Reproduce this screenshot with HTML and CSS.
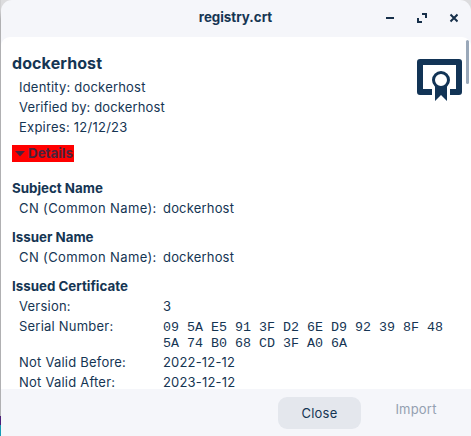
FILE: index.html
```html
<!DOCTYPE html>
<html lang="en">
<head>
<meta charset="utf-8">
<title>registry.crt</title>
<link rel="stylesheet" href="styles.css">
</head>
<body>
<div class="window">
  <header class="titlebar">
    <h1 class="title">registry.crt</h1>
    <svg class="controls" width="72" height="16" viewBox="0 0 72 16">
      <path class="dark" d="M0 7h8v2H0z"/>
      <path class="dark" d="M36 3h5v5h-2V5h-3zM31 8h2v3h3v2h-5z"/>
      <path class="cross" d="M64.500 4.500l7 7M71.500 4.500l-7 7"/>
    </svg>
  </header>
  <main class="content">
    <section class="summary">
      <div>
        <h2 class="name">dockerhost</h2>
        <p class="row">Identity: dockerhost</p>
        <p class="row verified">Verified by: dockerhost</p>
        <p class="row expires">Expires: 12/12/23</p>
      </div>
      <svg class="certificate" width="46" height="42" viewBox="0 0 46 42">
        <path class="navy" fill-rule="evenodd" d="M3 0h39a3 3 0 0 1 3 3v30a3 3 0 0 1-3 3H33v-6h6V6H6v24h9v6H3a3 3 0 0 1-3-3V3a3 3 0 0 1 3-3z"/>
        <path class="navy" d="M18 27h12v15l-6-6-6 6z"/>
        <circle class="seal" cx="24" cy="21" r="7.500"/>
      </svg>
    </section>
    <button class="details"><svg class="arrow" width="10" height="6" viewBox="0 0 10 6"><path d="M0 0h10L5 5.500z"/></svg>Details</button>
    <section class="group">
      <h3 class="heading">Subject Name</h3>
      <dl class="fields"><dt class="common">CN (Common Name):</dt><dd>dockerhost</dd></dl>
    </section>
    <section class="group">
      <h3 class="heading">Issuer Name</h3>
      <dl class="fields"><dt class="common">CN (Common Name):</dt><dd>dockerhost</dd></dl>
    </section>
    <section class="group">
      <h3 class="heading">Issued Certificate</h3>
      <dl class="fields">
        <dt>Version:</dt><dd>3</dd>
        <dt>Serial Number:</dt><dd class="mono">09 5A E5 91 3F D2 6E D9 92 39 8F 48 5A 74 B0 68 CD 3F A0 6A</dd>
        <dt>Not Valid Before:</dt><dd>2022-12-12</dd>
        <dt>Not Valid After:</dt><dd>2023-12-12</dd>
      </dl>
    </section>
    <div class="scrollbar"></div>
  </main>
  <footer class="actions">
    <button class="button close">Close</button>
    <button class="button import" disabled>Import</button>
  </footer>
</div>
</body>
</html>
```
FILE: styles.css
```css
* { box-sizing: border-box; margin: 0; padding: 0; }
html { background: #e4e4e6; }
body {
  height: 436px;
  padding: 0 0 0 1px;
  overflow: hidden;
  background:
    linear-gradient(#d0d0d2 10px, #b0b0b2 20px, #b0b0b2 416px, #4b1d78 416px, #4b1d78 425px, #159bb5 425px) left / 1px 436px no-repeat,
    #dcdcde;
  color: #153553;
  font: 13px/20px Inter, sans-serif;
}
.window {
  height: 436px;
  display: flex;
  flex-direction: column;
  border-radius: 11px 11px 0 0;
  background: #f5f6fa;
  overflow: hidden;
}
.titlebar {
  flex: none;
  height: 37px;
  display: grid;
  grid-template-columns: 385px 72px;
  align-items: center;
}
.title { padding-left: 84px; text-align: center; font-size: 13.333px; font-weight: 700; line-height: 20px; margin-top: -4px; }
.controls { display: block; margin-top: -1px; }
.dark { fill: #17304a; }
.cross { fill: none; stroke: #17304a; stroke-width: 2; }
.content {
  position: relative;
  flex: none;
  height: 352px;
  padding: 16px 8px 0 11px;
  border-radius: 9px 9px 0 0;
  background: #fff;
  overflow: hidden;
}
.summary { display: flex; justify-content: space-between; height: 85px; }
.name { height: 24px; font-size: 16px; font-weight: 700; line-height: 21px; letter-spacing: .1px; }
.row { padding-left: 7px; letter-spacing: .2px; }
.verified { letter-spacing: .12px; }
.expires { letter-spacing: .25px; }
.certificate { margin-top: 6px; }
.navy { fill: #123456; }
.seal { fill: #fff; stroke: #123456; stroke-width: 3; }
.details {
  display: flex;
  align-items: center;
  width: 62px;
  height: 17px;
  margin: 7px 0 16px;
  padding-left: 3px;
  gap: 3px;
  border: 0;
  background: #f00;
  color: #4a233c;
  font: 700 13.333px/17px Inter, sans-serif;
}
.arrow { flex: none; fill: #4a233c; }
.group { margin-bottom: 9px; }
.heading { font-size: 13.333px; font-weight: 700; line-height: 20px; }
.fields { display: grid; grid-template-columns: 144px 284px; padding-left: 7px; letter-spacing: .18px; }
.fields dt { letter-spacing: .22px; }
.fields .common { letter-spacing: .38px; }
.fields .mono { font: 13.333px/16px "Liberation Mono", monospace; padding: 4px 0 0; letter-spacing: 0; }
.scrollbar { position: absolute; top: 3px; right: 2px; width: 3px; height: 44px; border-radius: 2px; background: #9aa8b9; }
.actions { display: flex; height: 47px; padding: 8px 9px 0 277px; gap: 14px; }
.button { border: 0; border-radius: 9px; background: none; color: #153553; font: 13px/20px Inter, sans-serif; letter-spacing: .2px; height: 32px; }
.close { width: 83px; background: #e4e7ed; padding-bottom: 1px; }
.import { width: 82px; height: 26px; color: #94a0b1; padding-bottom: 2px; }
```
